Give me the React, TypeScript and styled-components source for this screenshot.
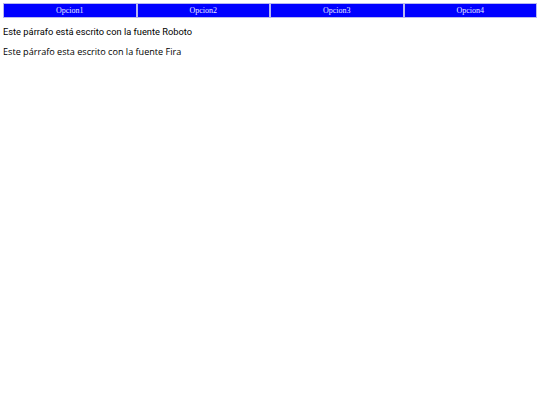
import React from 'react';
import styled, { createGlobalStyle } from 'styled-components';

const GlobalStyle = createGlobalStyle`
  html, body {
    margin: 0;
    padding: 0;
    background: #fff;
  }
`;

const Page = styled.div`
  padding: 3px;
`;

const Menu = styled.ul`
  display: flex;
  list-style: none;
  margin: 0 0 1px;
  padding: 0;
`;

const MenuItem = styled.li`
  flex: 1;
  height: 13px;
  display: flex;
  align-items: center;
  justify-content: center;
  background-color: #0000ff;
  border: 1px solid #b8b8f0;
  color: #e8e8ff;
  font-family: "Liberation Serif", serif;
  font-size: 8px;
`;

const Paragraph = styled.p<{ $font: string; $size: number }>`
  margin: 8px 0 0;
  font-family: ${(p) => p.$font};
  font-size: ${(p) => p.$size}px;
  line-height: 12px;
  color: #000;
`;

const options = ['Opcion1', 'Opcion2', 'Opcion3', 'Opcion4'];

const App: React.FC = () => {
  return (
    <>
      <GlobalStyle />
      <Page>
        <Menu>
          {options.map((o) => (
            <MenuItem key={o}>{o}</MenuItem>
          ))}
        </Menu>
        <Paragraph $font={'Roboto, sans-serif'} $size={9.3}>
          Este párrafo está escrito con la fuente Roboto
        </Paragraph>
        <Paragraph $font={'"Open Sans", sans-serif'} $size={9.1}>
          Este párrafo esta escrito con la fuente Fira
        </Paragraph>
      </Page>
    </>
  );
};

export default App;
